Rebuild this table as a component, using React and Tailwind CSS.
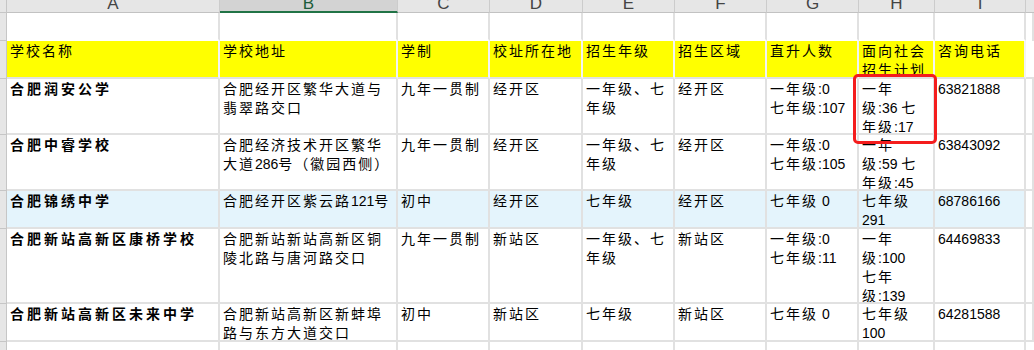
import React from 'react';

// column widths include the 2px grid line on the right
const colW = [
  'w-[213px]',
  'w-[178px]',
  'w-[92px]',
  'w-[93px]',
  'w-[92px]',
  'w-[92px]',
  'w-[92px]',
  'w-[76px]',
  'w-[91px]',
];
const letters = ['A', 'B', 'C', 'D', 'E', 'F', 'G', 'H', 'I'];

const header = [
  ['学校名称'],
  ['学校地址'],
  ['学制'],
  ['校址所在地'],
  ['招生年级'],
  ['招生区域'],
  ['直升人数'],
  ['面向社会', '招生计划'],
  ['咨询电话'],
];

const rows = [
  {
    h: 'h-[56px]',
    bg: 'bg-white',
    cells: [
      ['合肥润安公学'],
      ['合肥经开区繁华大道与', '翡翠路交口'],
      ['九年一贯制'],
      ['经开区'],
      ['一年级、七', '年级'],
      ['经开区'],
      ['一年级:0', '七年级:107'],
      ['一年', '级:36 七', '年级:17'],
      ['63821888'],
    ],
  },
  {
    h: 'h-[56px]',
    bg: 'bg-white',
    cells: [
      ['合肥中睿学校'],
      ['合肥经济技术开区繁华', '大道286号（徽园西侧）'],
      ['九年一贯制'],
      ['经开区'],
      ['一年级、七', '年级'],
      ['经开区'],
      ['一年级:0', '七年级:105'],
      ['一年', '级:59 七', '年级:45'],
      ['63843092'],
    ],
  },
  {
    h: 'h-[38px]',
    bg: 'bg-[#e4f4fc]',
    cells: [
      ['合肥锦绣中学'],
      ['合肥经开区紫云路121号'],
      ['初中'],
      ['经开区'],
      ['七年级'],
      ['经开区'],
      ['七年级 0'],
      ['七年级', '291'],
      ['68786166'],
    ],
  },
  {
    h: 'h-[75px]',
    bg: 'bg-white',
    cells: [
      ['合肥新站高新区康桥学校'],
      ['合肥新站新站高新区铜', '陵北路与唐河路交口'],
      ['九年一贯制'],
      ['新站区'],
      ['一年级、七', '年级'],
      ['新站区'],
      ['一年级:0', '七年级:11'],
      ['一年', '级:100', '七年', '级:139'],
      ['64469833'],
    ],
  },
  {
    h: 'h-[38px]',
    bg: 'bg-white',
    cells: [
      ['合肥新站高新区未来中学'],
      ['合肥新站高新区新蚌埠', '路与东方大道交口'],
      ['初中'],
      ['新站区'],
      ['七年级'],
      ['新站区'],
      ['七年级 0'],
      ['七年级', '100'],
      ['64281588'],
    ],
  },
];

// CJK runs get the wide Excel-like spacing, digits and latin stay tight
const Text = ({ s, bold }) => {
  const runs = s.match(/[\u3000-\u9fff\uff00-\uffef]+|[^\u3000-\u9fff\uff00-\uffef]+/g) || [];
  return (
    <div className={`whitespace-pre leading-[19px] ${bold ? 'font-bold' : ''}`}>
      {runs.map((r, i) =>
        /[\u3000-\u9fff\uff00-\uffef]/.test(r) ? (
          <span key={i} className={bold ? 'tracking-[3px]' : 'tracking-[2px]'}>{r}</span>
        ) : (
          <span key={i}>{r}</span>
        )
      )}
    </div>
  );
};

const RowHead = ({ h }) => (
  <div className={`${h} w-[7px] shrink-0 bg-[#e6e6e6] border-r border-b border-[#c6c6c6]`}></div>
);

const App = () => {
  return (
    <div className="relative w-[1034px] h-[350px] overflow-hidden bg-white text-black text-[14px] font-['Liberation_Sans','Noto_Sans_CJK_SC',sans-serif]">

      {/* Column letters, scrolled so their tops are cut off */}
      <div className="flex h-[13px]">
        <div className="w-[7px] shrink-0 bg-[#e6e6e6] border-r border-b border-[#c6c6c6]"></div>
        {letters.map((l, i) => (
          <div
            key={l}
            className={`${colW[i]} shrink-0 overflow-hidden border-r border-[#cccccc] ${
              i === 1 ? 'bg-[#d3d3d3] border-b-2 border-b-[#217346] text-[#1d5c3a]' : 'bg-[#e6e6e6] border-b border-b-[#c2c2c2] text-[#444]'
            }`}
          >
            <span className="block -mt-[5px] text-center text-[17px] leading-[17px]">{l}</span>
          </div>
        ))}
        <div className="flex-1 bg-[#e6e6e6] border-b border-[#c2c2c2]"></div>
      </div>

      {/* Empty first row */}
      <div className="flex h-[28px]">
        <RowHead h="h-[28px]" />
        {colW.map((w, i) => (
          <div key={i} className={`${w} shrink-0 border-r-2 border-r-[#e1e1e1] border-b-2 border-b-white`}></div>
        ))}
        <div className="flex-1 border-r-2 border-[#e1e1e1]"></div>
      </div>

      {/* Yellow title row */}
      <div className="flex h-[38px]">
        <RowHead h="h-[38px]" />
        {header.map((lines, i) => (
          <div
            key={i}
            className={`${colW[i]} shrink-0 overflow-hidden bg-[#ffff00] px-[3px] pt-[1px] border-r-2 border-r-[#f3f3f3] border-b-2 border-b-[#e1e1e1]`}
          >
            {lines.map((s, j) => <Text key={j} s={s} />)}
          </div>
        ))}
        <div className="flex-1 border-b-2 border-[#e1e1e1]"></div>
      </div>

      {/* Data rows */}
      {rows.map((row, r) => (
        <div key={r} className={`flex ${row.h}`}>
          <RowHead h={row.h} />
          {row.cells.map((lines, i) => (
            <div
              key={i}
              className={`${colW[i]} shrink-0 overflow-hidden ${row.bg} px-[3px] pt-[1px] border-r-2 border-b-2 border-[#e1e1e1]`}
            >
              {lines.map((s, j) => <Text key={j} s={s} bold={i === 0} />)}
            </div>
          ))}
          <div className="flex-1 border-r-2 border-b-2 border-[#e1e1e1]"></div>
        </div>
      ))}

      {/* Trailing empty row */}
      <div className="flex h-[40px]">
        <RowHead h="h-[40px]" />
        {colW.map((w, i) => (
          <div key={i} className={`${w} shrink-0 border-r-2 border-[#e1e1e1]`}></div>
        ))}
        <div className="flex-1"></div>
      </div>

      {/* Red highlight box */}
      <div className="absolute left-[853px] top-[74px] w-[84px] h-[70px] border-[3px] border-[#f41d1d] rounded-[5px]"></div>
    </div>
  );
};

export default App;
